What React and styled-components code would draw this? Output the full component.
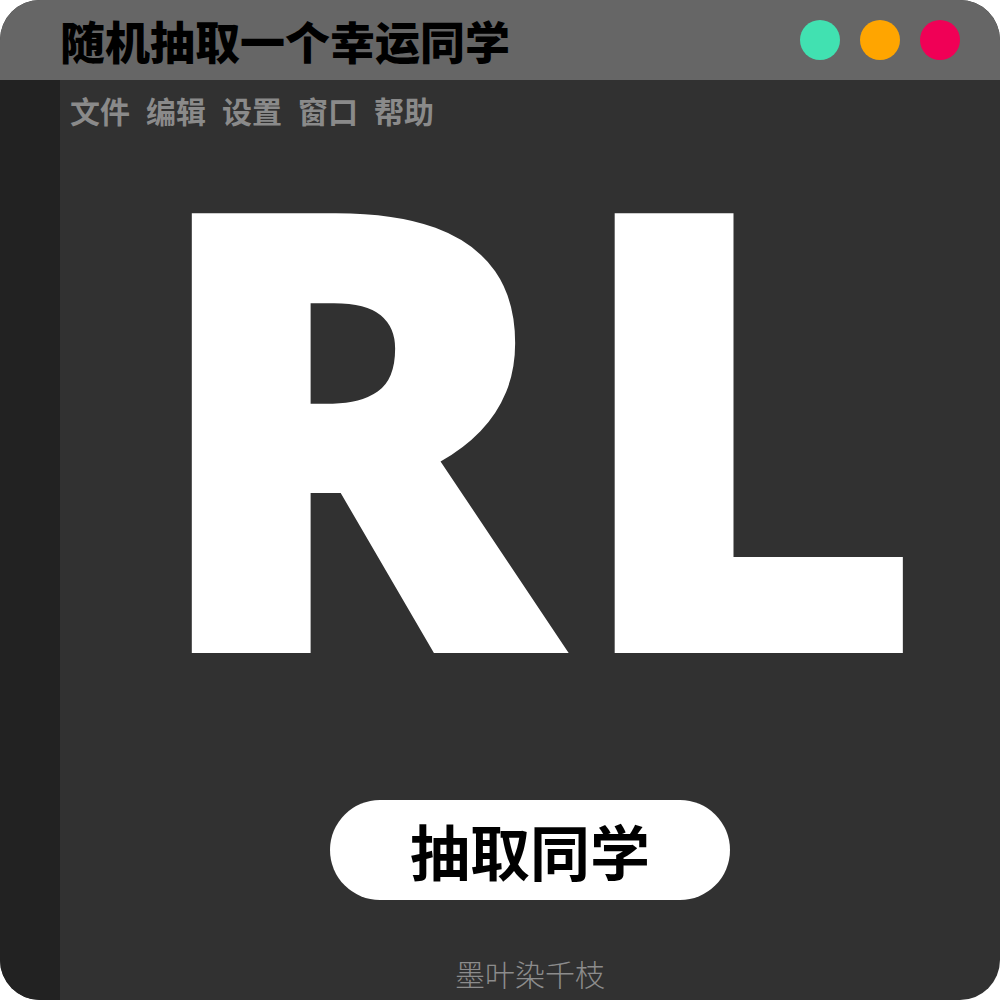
import React from 'react';
import styled, { createGlobalStyle } from 'styled-components';

const GlobalStyle = createGlobalStyle`
    html, body {
        margin: 0;
        padding: 0;
        background: #ffffff;
    }
    body {
        font-family: 'Noto Sans CJK SC', 'Noto Sans', sans-serif;
    }
`;

const Window = styled.div`
    width: 1000px;
    height: 1000px;
    border-radius: 40px;
    overflow: hidden;
    display: flex;
    flex-direction: column;
    background-color: #313131;
`;

const TitleBar = styled.div`
    height: 80px;
    flex-shrink: 0;
    display: flex;
    align-items: center;
    justify-content: space-between;
    padding: 0 40px 0 60px;
    background-color: #666666;
`;

const Title = styled.h1`
    margin: 0;
    font-size: 45px;
    font-weight: 900;
    line-height: 1;
    color: #000000;
`;

const Lights = styled.div`
    display: flex;
    gap: 20px;
`;

const Light = styled.span`
    width: 40px;
    height: 40px;
    border-radius: 50%;
    background-color: ${(p) => p.color};
`;

const Body = styled.div`
    flex: 1;
    display: flex;
    min-height: 0;
`;

const Sidebar = styled.div`
    width: 60px;
    flex-shrink: 0;
    background-color: #222222;
`;

const Main = styled.div`
    flex: 1;
    display: flex;
    flex-direction: column;
    align-items: center;
`;

const Menu = styled.nav`
    align-self: stretch;
    display: flex;
    gap: 16px;
    box-sizing: border-box;
    padding: 12px 0 0 10px;
    height: 60px;
`;

const MenuItem = styled.span`
    font-size: 30px;
    font-weight: 700;
    line-height: 36px;
    color: #8a8a8a;
`;

const Hero = styled.div`
    height: 550px;
    display: flex;
    align-items: center;
    justify-content: center;
    box-sizing: border-box;
    padding-left: 16px;
    font-family: 'Open Sans', 'Liberation Sans', sans-serif;
    font-weight: 800;
    font-size: 616px;
    line-height: 0.85;
    color: #ffffff;
    letter-spacing: 6px;
`;

const DrawButton = styled.button`
    margin-top: 110px;
    width: 400px;
    height: 100px;
    border: none;
    border-radius: 50px;
    background-color: #ffffff;
    color: #000000;
    font-family: 'Noto Sans CJK SC', sans-serif;
    font-size: 60px;
    font-weight: 700;
    line-height: 1;
    cursor: pointer;
`;

const Footer = styled.div`
    margin-top: 58px;
    font-size: 30px;
    font-weight: 300;
    color: #8c8c8c;
    line-height: 1;
`;

const MENU = ['文件', '编辑', '设置', '窗口', '帮助'];

export default function App() {
    return (
        <>
            <GlobalStyle />
            <Window>
                <TitleBar>
                    <Title>随机抽取一个幸运同学</Title>
                    <Lights>
                        <Light color="#41e1b1" />
                        <Light color="#ffa500" />
                        <Light color="#f00056" />
                    </Lights>
                </TitleBar>
                <Body>
                    <Sidebar />
                    <Main>
                        <Menu>
                            {MENU.map((m) => (
                                <MenuItem key={m}>{m}</MenuItem>
                            ))}
                        </Menu>
                        <Hero>RL</Hero>
                        <DrawButton type="button">抽取同学</DrawButton>
                        <Footer>墨叶染千枝</Footer>
                    </Main>
                </Body>
            </Window>
        </>
    );
}
